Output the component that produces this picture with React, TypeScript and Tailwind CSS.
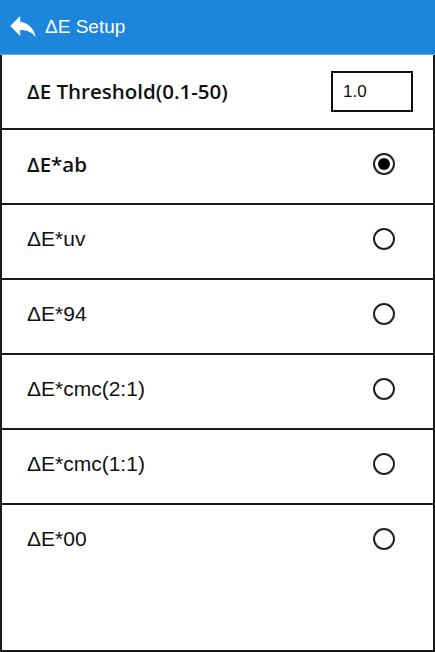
import React from "react";

const options = ["ΔE*ab", "ΔE*uv", "ΔE*94", "ΔE*cmc(2:1)", "ΔE*cmc(1:1)", "ΔE*00"];

function Radio({ checked }: { checked: boolean }) {
  return (
    <div className="w-[22px] h-[22px] rounded-full border-2 border-[#222] flex items-center justify-center bg-white">
      {checked && <div className="w-[12px] h-[12px] rounded-full bg-black" />}
    </div>
  );
}

export default function App() {
  return (
    <div className="w-[435px] h-[652px] flex flex-col bg-white" style={{ fontFamily: '"Liberation Sans", Arial, sans-serif' }}>
      <div className="h-[55px] bg-[#1b86dc] border-b border-[#5fabea] flex items-center shrink-0">
        <svg viewBox="0 0 24 24" className="w-[34px] h-[34px] ml-[6px] mt-[-3px]" fill="white">
          <path d="M10 9V5l-7 7 7 7v-4.1c5 0 8.5 1.6 11 5.1-1-5-4-10-11-11z" />
        </svg>
        <span className="ml-[5px] text-white text-[19px]">ΔE Setup</span>
      </div>
      <div className="flex-1 flex flex-col border-x-2 border-b-2 border-[#1a1a1a]">
        <div className="h-[75px] shrink-0 border-b-2 border-[#1a1a1a] flex items-center justify-between pl-[25px] pr-[20px]">
          <span className="text-[20.5px] font-semibold text-[#111]" style={{ fontFamily: '"Open Sans", sans-serif' }}>ΔE Threshold(0.1-50)</span>
          <div className="w-[82px] h-[41px] border-2 border-[#111] flex items-center pl-[10px] text-[17px] text-[#111]">1.0</div>
        </div>
        {options.map((o, i) => (
          <div
            key={o}
            className={
              i === options.length - 1
                ? "flex-1"
                : "h-[75px] shrink-0 border-b-2 border-[#1a1a1a]"
            }
          >
            <div className="h-[68px] flex items-center justify-between pl-[25px] pr-[38px]">
              {i === 0 ? (
                <span className="text-[20.5px] font-semibold text-[#111]" style={{ fontFamily: '"Open Sans", sans-serif' }}>{o}</span>
              ) : (
                <span className="text-[21px] text-[#111]">{o}</span>
              )}
              <Radio checked={i === 0} />
            </div>
          </div>
        ))}
      </div>
    </div>
  );
}
